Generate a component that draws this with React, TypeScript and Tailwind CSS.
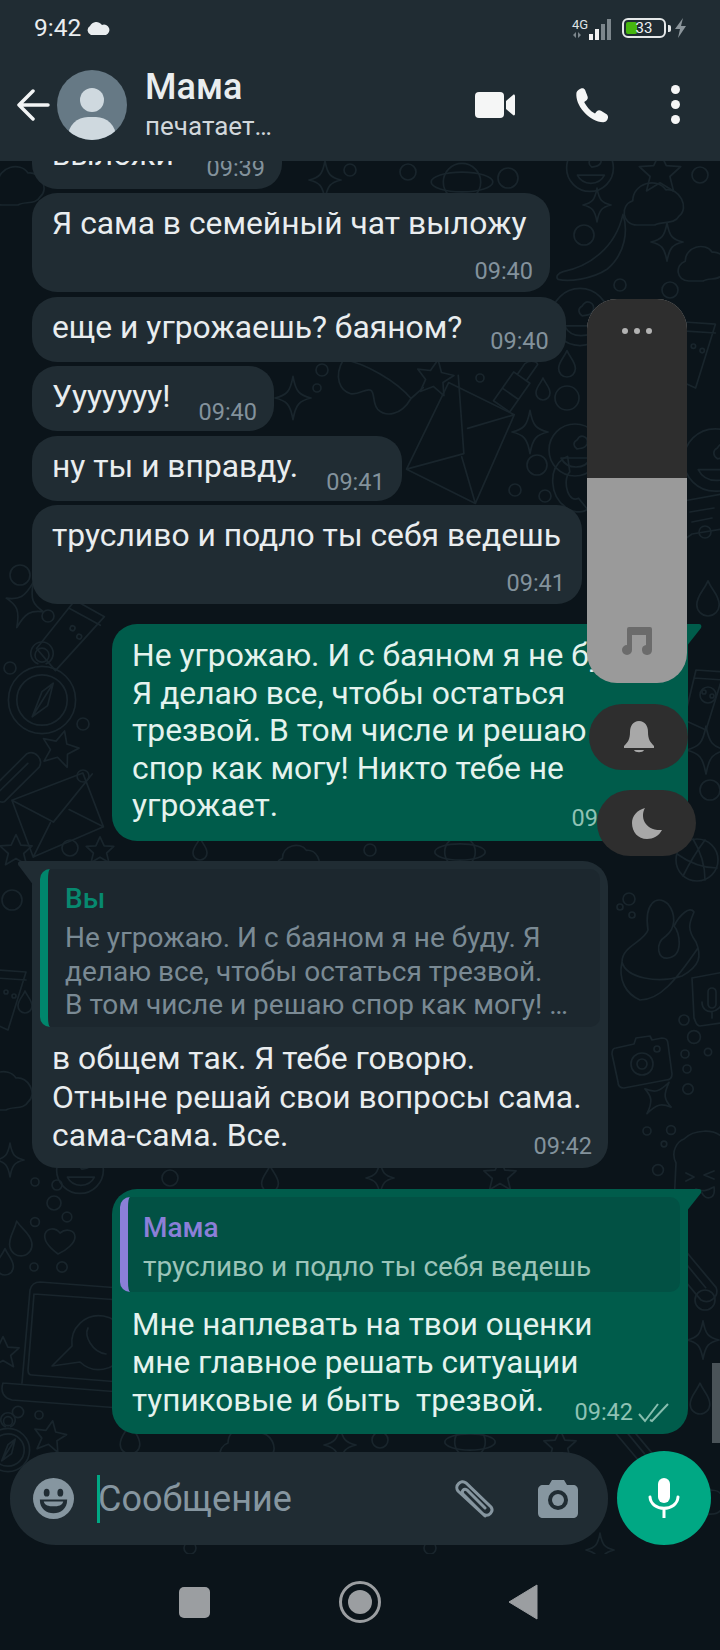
import React from 'react';

const font = { fontFamily: 'Roboto, "Noto Sans", sans-serif' };

type Doodle = [string, number, number, number?, number?];

// wallpaper doodles: [symbol, x, y, scale, rotation]
const doodles: Doodle[] = [
  ['cloud', 20, 185, 1], ['star4', 325, 180, 0.8], ['circle', 350, 170, 0.3], ['circle', 408, 172, 0.4], ['planet', 462, 182, 1.1], ['circle', 508, 178, 0.5],
  ['face', 590, 168, 0.9], ['star5', 660, 172, 0.9], ['cloud', 657, 203, 1.1], ['star4', 597, 205, 0.7], ['circle', 700, 175, 0.4],
  ['banana', 597, 243, 1.3], ['star4', 667, 242, 0.8], ['cloud', 705, 263, 0.9], ['circle', 584, 235, 0.5], ['circle', 620, 285, 0.3], ['circle', 670, 290, 0.4],
  ['face', 580, 317, 1.1], ['drop', 567, 365, 0.6], ['circle', 567, 398, 0.6], ['drop', 543, 390, 0.5],
  ['star4', 530, 432, 0.9], ['envelope', 462, 443, 1.9, -55], ['lipstick', 518, 383, 1.1, 35], ['face', 575, 450, 1],
  ['circle', 537, 465, 0.5], ['circle', 515, 490, 0.3], ['circle', 545, 496, 0.3], ['handset', 572, 485, 1.1],
  ['sunglasses', 372, 388, 1.3, 30], ['star5', 435, 377, 0.8, 10], ['star4', 293, 398, 0.9], ['circle', 322, 370, 0.3], ['circle', 317, 388, 0.2], ['circle', 480, 378, 0.2],
  ['glass', 700, 355, 1.1], ['face', 715, 460, 1.2], ['speech', 700, 520, 1], ['drop', 708, 600, 0.8], ['circle', 705, 532, 0.3],
  ['circle', 20, 575, 0.5], ['star4', 25, 605, 1, 20], ['circle', 48, 616, 0.3], ['glass', 75, 640, 1.2, 25],
  ['compass', 42, 700, 1.4], ['circle', 10, 668, 0.3], ['circle', 83, 724, 0.3], ['star5', 60, 748, 0.8, 15],
  ['clip', 12, 770, 1.2, -35], ['circle', 83, 776, 0.3], ['envelope', 58, 815, 1.5, -12], ['circle', 70, 848, 0.4],
  ['star5', 16, 850, 0.7], ['circle', 12, 900, 0.5], ['glass', 12, 1000, 1], ['drop', 25, 1003, 0.5], ['cloud', 8, 1090, 1],
  ['star4', 10, 1160, 0.7], ['circle', 35, 1182, 0.2], ['circle', 57, 1185, 0.25], ['circle', 54, 1203, 0.35], ['circle', 35, 1222, 0.22], ['circle', 67, 1217, 0.24],
  ['drop', 20, 1240, 0.8, -10], ['drop', 5, 1263, 0.6], ['heart', 60, 1240, 1], ['circle', 34, 1267, 0.2], ['circle', 62, 1267, 0.26],
  ['laptop', 60, 1340, 1], ['star5', 3, 1352, 0.7], ['circle', 18, 1412, 0.28], ['circle', 39, 1415, 0.2], ['star5', 50, 1436, 0.7, 10], ['compass', 8, 1450, 0.9],
  ['glass', 710, 700, 1], ['circle', 708, 695, 0.4], ['star4', 706, 750, 1], ['circle', 710, 790, 0.5],
  ['globe', 697, 860, 1], ['squiggle', 660, 950, 1], ['micbox', 710, 1000, 1], ['circle', 629, 899, 0.3], ['circle', 620, 907, 0.15], ['circle', 632, 915, 0.15],
  ['camera', 642, 1062, 1], ['star4', 658, 1098, 0.8, 35], ['circle', 684, 1020, 0.25], ['circle', 694, 1037, 0.32], ['circle', 685, 1054, 0.2], ['circle', 687, 1069, 0.2], ['circle', 688, 1089, 0.26], ['circle', 708, 1052, 0.18],
  ['circle', 647, 1131, 0.2], ['circle', 671, 1130, 0.22], ['circle', 664, 1144, 0.14], ['cookie', 700, 1165, 1], ['circle', 658, 1170, 0.27],
  ['clip', 700, 1270, 1.3, 60], ['star5', 500, 1175, 0.7], ['drop', 270, 1180, 0.6], ['circle', 170, 1178, 0.4], ['star4', 380, 1178, 0.7], ['face', 80, 1170, 0.9],
  ['cloud', 300, 860, 0.8], ['star5', 100, 850, 0.6], ['planet', 460, 852, 0.9], ['circle', 370, 850, 0.3], ['drop', 200, 850, 0.5],
  ['star4', 340, 1445, 0.8], ['cloud', 250, 1445, 1], ['circle', 380, 1440, 0.4], ['planet', 470, 1442, 0.9], ['clip', 640, 1440, 1, 60],
  ['drop', 130, 1440, 0.7], ['star5', 560, 1445, 0.7], ['circle', 430, 1548, 0.3], ['circle', 190, 1548, 0.3], ['star4', 600, 1550, 0.7],
  ['circle', 705, 1300, 0.5], ['star4', 703, 1340, 0.8], ['drop', 700, 1400, 0.7], ['cloud', 705, 1500, 0.8],
];

const Wallpaper = () => (
  <svg className="absolute left-0 top-0 w-[720px] h-[1393px]" viewBox="0 161 720 1393" fill="none" stroke="#19252c" strokeLinecap="round" strokeLinejoin="round">
    <defs>
      <symbol id="circle" overflow="visible"><circle r="20" /></symbol>
      <symbol id="star4" overflow="visible"><path d="M0-24C3-7 7-3 20 0 7 3 3 7 0 24-3 7-7 3-20 0-7-3-3-7 0-24Z" /></symbol>
      <symbol id="star5" overflow="visible"><path d="M0-22 7-7 23-6 11 5 15 21 0 12-15 21-11 5-23-6-7-7Z" /></symbol>
      <symbol id="drop" overflow="visible"><path d="M0-24C5-12 14-6 14 6A14 14 0 0 1-14 6C-14-6-5-12 0-24Z" /></symbol>
      <symbol id="cloud" overflow="visible"><path d="M-18 20C-32 20-34 2-22 -2-22-18 0-24 8-12 20-14 30 4 20 12 16 20 4 16-2 20Z" /></symbol>
      <symbol id="face" overflow="visible"><circle r="26" /><path d="M-14 8C-8 20 10 20 16 8ZM2-10C6-17 14-13 12-6 10-1 6-2 2-1-2-4-2-8 2-10Z" /></symbol>
      <symbol id="planet" overflow="visible"><circle r="17" /><ellipse rx="28" ry="9" /></symbol>
      <symbol id="compass" overflow="visible"><circle r="24" /><circle r="18" /><circle cy="-32" r="5" /><path d="M-3-26A8 8 0 1 1 3-26M8-12-7 12 0-6ZM8-12-7 12 4 4Z" /></symbol>
      <symbol id="envelope" overflow="visible"><path d="M-28-16 22-24 28 14-22 24ZM-28-16-4 4 28-22M-22 24-6 4M28 14 8-2" /></symbol>
      <symbol id="clip" overflow="visible"><path d="M-28 4 18-4A8 8 0 0 1 20 11L-20 18A5 5 0 0 1-22 9L14 3" /></symbol>
      <symbol id="handset" overflow="visible"><path d="M-8-24C-22-14-20 10-6 20-1 25 10 26 14 22L6 12C2 14-2 12-4 6-6 0-6-8-2-12L-4-26Z" /></symbol>
      <symbol id="glass" overflow="visible"><path d="M-14-30-26 20-4 30 14-28ZM-16-22 14-20" /><circle cx="-6" cy="-8" r="2" /><circle cx="2" cy="-4" r="2" /></symbol>
      <symbol id="speech" overflow="visible"><path d="M-22-18 22-26 28 8-8 14-22 24-18 10ZM-10-8 14-12M-8 2 12-2" /></symbol>
      <symbol id="banana" overflow="visible"><path d="M-26 22C-6 18 14 4 20-22 24-10 22 8 8 20-4 28-22 30-30 28-32 26-30 23-26 22Z" /></symbol>
      <symbol id="lipstick" overflow="visible"><path d="M-9-6H9V26H-9ZM-5-6V-18C-3-24 3-26 5-24V-6M-9 12H9" /></symbol>
      <symbol id="sunglasses" overflow="visible"><path d="M-30-8C-14-14 14-14 30-8 30 8 20 14 12 12 6 10 4 2 0 2-4 2-6 10-12 12-20 14-30 8-30-8ZM-30-8-34-20M30-8 34-20" /></symbol>
      <symbol id="heart" overflow="visible"><path d="M-2 14C-10 8-17 1-15-6-13-12-5-13 0-7 6-12 15-10 15-3 15 3 7 10-2 14Z" /></symbol>
      <symbol id="laptop" overflow="visible"><path d="M-38 43-30-50Q-28-58-20-58L60-52M-26-46-32 30Q-32 35-28 35L60 42M-26-46 60-40M-57 43 60 52M-57 43C-60 52-56 58-48 60L60 68" /><path d="M12 6A27 27 0 1 1 20 22L-8 26Z" /><path d="M28-12C24-4 32 12 46 14" /></symbol>
      <symbol id="globe" overflow="visible"><circle r="21" /><path d="M-20-6C-6 4 6 8 20 8M-14 16C-6 0 2-12 8-20M-4-21C4-8 8 6 8 20" /></symbol>
      <symbol id="squiggle" overflow="visible"><path d="M-38 12C-38-4-16-8-12-20-16-46-4-56 8-46 16-36 16-22 6-14-6-6-2 10 8 8 24 6 20-18 14-24 20-36 30-44 34-38 30-28 26-22 36-8 42 6 40 16 22 26-2 34-34 28-38 12ZM-38 12C-42 30-34 44-20 50 0 50 16 30 38-2" /></symbol>
      <symbol id="micbox" overflow="visible"><path d="M-18-22 14-28C18-28 20-26 20-22L24 16C24 20 22 22 18 22L-10 26C-14 26-14 22-16 18ZM-2-8A4 4 0 0 1 6-8V4A4 4 0 0 1-2 4ZM-8 2C-8 16 12 14 12 0M2 12V18" /></symbol>
      <symbol id="camera" overflow="visible"><path d="M-26-14-8-18-6-24 8-26 10-22 20-24C24-24 26-22 26-18L30 12C30 16 28 18 24 18L-18 26C-22 26-24 24-24 20L-30-8C-30-12-28-14-26-14Z" /><circle cy="2" r="11" /><circle cy="2" r="5" /><circle cx="15" cy="-13" r="3" /></symbol>
      <symbol id="cookie" overflow="visible"><path d="M-26 40-24-2C-30-14-22-24-16-26-6-36 14-36 22-28M-14 8-6 12-14 16M14 6 4 10 14 14M-4 24C4 28 10 24 14 22 16 34 6 36 2 28" /></symbol>
    </defs>
    {doodles.map(([name, x, y, s = 1, r = 0], i) => (
      <use key={i} href={`#${name}`} transform={`translate(${x} ${y}) rotate(${r}) scale(${s})`} strokeWidth={1.7 / s} />
    ))}
  </svg>
);

const InTail = () => (
  <svg className="absolute left-[-14px] top-0" width="16" height="26" viewBox="0 0 16 26">
    <path d="M16 0H3C0 0-1 3 1 5L16 25Z" fill="#202c33" />
  </svg>
);

const OutTail = () => (
  <svg className="absolute right-[-14px] top-0" width="16" height="24" viewBox="0 0 16 24">
    <path d="M0 0H13C15 0 16 2 15 4L0 23Z" fill="#005c4b" />
  </svg>
);

const Ticks = () => (
  <svg width="34" height="22" viewBox="0 0 34 22" fill="none" stroke="#86bdae" strokeWidth="2">
    <path d="M2 13 8 20 21 3" />
    <path d="M13 19 15 20 31 3" />
  </svg>
);

const Time = ({ children, out }: { children: React.ReactNode; out?: boolean }) => (
  <span className={`text-[23.5px] leading-[28px] whitespace-nowrap ${out ? 'text-[#8fc2b4]' : 'text-[#83929c]'}`}>{children}</span>
);

// one line bubble with the time to the right of the text
const InlineBubble = ({ text, time, offset }: { text: string; time: string; offset: string }) => (
  <div className="w-fit h-[65px] flex items-start gap-[28px] rounded-[25px] bg-[#202c33] pl-[20px] pr-[17px] pt-[12px] text-[31.8px] leading-[37px] text-[#e9edef]">
    <span className="whitespace-nowrap">{text}</span>
    <span className={`leading-none ${offset}`}><Time>{time}</Time></span>
  </div>
);

const StackBubble = ({ text, time, width }: { text: string; time: string; width: string }) => (
  <div className={`${width} h-[99px] flex flex-col rounded-[25px] bg-[#202c33] pl-[20px] pr-[17px] pt-[12px] text-[31.8px] leading-[37px] text-[#e9edef]`}>
    <span className="whitespace-nowrap">{text}</span>
    <span className="self-end mt-[8px]"><Time>{time}</Time></span>
  </div>
);

const VolumePanel = () => (
  <>
    <div className="absolute left-[587px] top-[299px] w-[100px] h-[384px] rounded-[30px] overflow-hidden flex flex-col bg-[#9a9a9a]">
      <div className="h-[179px] bg-[#2e2e2e] flex justify-center gap-[6px] pt-[29px]">
        <span className="w-[6px] h-[6px] rounded-full bg-[#b3b3b3]" />
        <span className="w-[6px] h-[6px] rounded-full bg-[#b3b3b3]" />
        <span className="w-[6px] h-[6px] rounded-full bg-[#b3b3b3]" />
      </div>
      <div className="flex-1 flex items-end justify-center pb-[27px]">
        <svg width="30" height="30" viewBox="0 0 30 30" fill="#6b6b6b">
          <path d="M7 1H28A2 2 0 0 1 30 3V24A5 5 0 1 1 24 19V9H10V24A5 5 0 1 1 5 19V3A2 2 0 0 1 7 1Z" />
        </svg>
      </div>
    </div>
    <div className="absolute left-[589px] top-[704px] w-[99px] h-[66px] rounded-[33px] bg-[#2e2e2e] flex items-center justify-center">
      <svg width="32" height="34" viewBox="0 0 32 34" fill="#a8a8a8">
        <path d="M16 1C22 1 25 6 25 12C25 19 27 22 31 26V28H1V26C5 22 7 19 7 12C7 6 10 1 16 1ZM11 30H21C20 33 12 33 11 30Z" />
      </svg>
    </div>
    <div className="absolute left-[597px] top-[790px] w-[99px] h-[66px] rounded-[33px] bg-[#2e2e2e] flex items-center justify-center">
      <svg width="32" height="32" viewBox="0 0 32 32" fill="#a8a8a8">
        <path d="M14 1C9 9 13 24 31 23C28 29 22 32 16 32C7 32 1 25 1 16C1 9 6 3 14 1Z" />
      </svg>
    </div>
  </>
);

export default function App() {
  return (
    <div style={font} className="relative w-[720px] h-[1650px] overflow-hidden flex flex-col bg-[#0b141a]">
      <header className="z-10 h-[161px] shrink-0 bg-[#202c33] flex flex-col">
        <div className="h-[56px] flex items-center justify-between pl-[34px] pr-[33px]">
          <div className="flex items-center gap-[5px]">
            <span className="text-[24.5px] leading-none text-[#e9edef]">9:42</span>
            <svg width="24" height="14" viewBox="0 0 24 14" fill="#e9edef">
              <path d="M5 14A5 5 0 0 1 4 5 7 7 0 0 1 16 4 5 5 0 0 1 20 14Z" />
            </svg>
          </div>
          <div className="flex items-center">
            <div className="flex flex-col w-[20px]">
              <span className="text-[13px] leading-[13px] text-[#dfe3e5]">4G</span>
              <svg width="18" height="8" viewBox="0 0 18 8" fill="#7c868c"><path d="M4 1V7L1 4ZM6 1V7L9 4Z" /></svg>
            </div>
            <svg width="24" height="22" viewBox="0 0 24 22" className="ml-[-3px] mt-[2px]">
              <rect x="0" y="16" width="4" height="6" fill="#f2f2f2" />
              <rect x="6" y="11" width="4" height="11" fill="#f2f2f2" />
              <rect x="12" y="6" width="4" height="16" fill="#7c868c" />
              <rect x="18" y="1" width="4" height="21" fill="#7c868c" />
            </svg>
            <div className="relative ml-[9px] w-[44px] h-[20px] rounded-[6px] border-2 border-[#e5e8e9] p-[2px]">
              <div className="w-[11px] h-full rounded-[2px] bg-[#46b60f]" />
              <span className="absolute inset-0 flex items-center justify-center text-[15px] leading-none text-[#eef1f2]">33</span>
            </div>
            <span className="ml-[2px] w-[3px] h-[7px] rounded-r-[2px] bg-[#e5e8e9]" />
            <svg width="13" height="20" viewBox="0 0 13 20" fill="#8b959b" className="ml-[3px]">
              <path d="M9 0 1 11H6L4 20 12 8H7Z" />
            </svg>
          </div>
        </div>
        <div className="flex-1 flex items-start pl-[17px] pr-[40px] pt-[14px]">
          <svg width="33" height="32" viewBox="0 0 33 32" fill="none" stroke="#f2f4f5" strokeWidth="3.5" strokeLinecap="round" strokeLinejoin="round" className="mt-[19px] shrink-0">
            <path d="M31 16H2M16 2 2 16 16 30" />
          </svg>
          <div className="relative ml-[7px] w-[70px] h-[70px] rounded-full overflow-hidden bg-[#667985] shrink-0">
            <div className="absolute left-[23px] top-[18px] w-[24px] h-[24px] rounded-full bg-[#cfd9df]" />
            <div className="absolute left-[11px] top-[47px] w-[48px] h-[40px] rounded-full bg-[#cfd9df]" />
          </div>
          <div className="ml-[18px] flex flex-col">
            <span className="text-[36px] font-medium leading-[38px] mt-[-2px] text-[#e9edef]">Мама</span>
            <span className="text-[26px] leading-[30px] mt-[5px] text-[#d1d7db]">печатает…</span>
          </div>
          <div className="ml-auto flex items-center mt-[15px]">
            <svg width="40" height="26" viewBox="0 0 40 26" fill="#f5f6f6">
              <rect x="0" y="0" width="29" height="26" rx="4" />
              <path d="M31 9 38 3C39 2 40 3 40 4V22C40 23 39 24 38 23L31 17Z" />
            </svg>
            <svg width="37" height="36" viewBox="0 0 24 24" fill="#f5f6f6" className="ml-[57px]">
              <path d="M6.6 0.8C5.6 0.8 3 2 2.6 4C2.2 8 4 12.5 7.5 16.5 11 20.5 16 23.5 20.5 23.5 22.5 23.5 23.7 21.5 23.7 20 23.7 19 23 18.3 22.2 17.8L19 15.8C18 15.2 17 15.4 16.2 16.2L15 17.6C12 16.4 9 12.5 7.8 10L9.4 8.8C10.2 8.2 10.4 7.2 10 6.2L8.4 2C8 1.2 7.4 0.8 6.6 0.8Z" />
            </svg>
            <div className="ml-[62px] flex flex-col gap-[6px]">
              <span className="w-[9px] h-[9px] rounded-full bg-[#f5f6f6]" />
              <span className="w-[9px] h-[9px] rounded-full bg-[#f5f6f6]" />
              <span className="w-[9px] h-[9px] rounded-full bg-[#f5f6f6]" />
            </div>
          </div>
        </div>
      </header>

      <main className="relative flex-1 flex flex-col overflow-hidden">
        <Wallpaper />
        <div className="relative flex-1 flex flex-col overflow-hidden pl-[32px]">
          <div className="flex flex-col mt-[-37px]">
            <div className="w-[250px] h-[65px] flex items-start justify-between rounded-[25px] bg-[#202c33] pl-[20px] pr-[17px] pt-[12px] text-[31.8px] leading-[37px] text-[#e9edef]">
              <span>выложи</span>
              <span className="leading-none pt-[14px]"><Time>09:39</Time></span>
            </div>
            <div className="mt-[4px]"><StackBubble width="w-[518px]" text="Я сама в семейный чат выложу" time="09:40" /></div>
            <div className="mt-[5px]"><InlineBubble text="еще и угрожаешь? баяном?" time="09:40" offset="pt-[14px]" /></div>
            <div className="mt-[4px]"><InlineBubble text="Ууууууу!" time="09:40" offset="pt-[16px]" /></div>
            <div className="mt-[5px]"><InlineBubble text="ну ты и вправду." time="09:41" offset="pt-[16px]" /></div>
            <div className="mt-[4px]"><StackBubble width="w-[550px]" text="трусливо и подло ты себя ведешь" time="09:41" /></div>

            <div className="relative ml-[80px] mt-[20px] w-[576px] h-[217px] rounded-[25px] rounded-tr-none bg-[#005c4b] pl-[20px] pt-[13px] text-[31.8px] leading-[37.5px] text-[#e4f3ee]">
              <OutTail />
              <div className="whitespace-nowrap">
                Не угрожаю. И с баяном я не буду.<br />
                Я делаю все, чтобы остаться<br />
                трезвой. В том числе и решаю<br />
                спор как могу! Никто тебе не<br />
                угрожает.
              </div>
              <div className="absolute right-[58px] bottom-[7px]"><Time out>09:42</Time></div>
            </div>

            <div className="relative mt-[20px] w-[576px] h-[307px] rounded-[25px] rounded-tl-none bg-[#202c33] pl-[8px] pr-[8px] pt-[8px]">
              <InTail />
              <div className="h-[158px] rounded-[10px] bg-[#1c272e] border-l-[8px] border-[#00866c] pl-[17px] pt-[14px]">
                <div className="text-[28px] font-medium leading-[32px] text-[#07896f]">Вы</div>
                <div className="mt-[6px] text-[28px] leading-[33.5px] text-[#7a8a94] whitespace-nowrap">
                  Не угрожаю. И с баяном я не буду. Я<br />
                  делаю все, чтобы остаться трезвой.<br />
                  В том числе и решаю спор как могу! …
                </div>
              </div>
              <div className="pl-[12px] pt-[12px] text-[31.8px] leading-[38.5px] text-[#e9edef] whitespace-nowrap">
                в общем так. Я тебе говорю.<br />
                Отныне решай свои вопросы сама.<br />
                сама-сама. Все.
              </div>
              <div className="absolute right-[16px] bottom-[7px]"><Time>09:42</Time></div>
            </div>

            <div className="relative ml-[80px] mt-[21px] w-[576px] h-[245px] rounded-[25px] rounded-tr-none bg-[#005c4b] px-[8px] pt-[8px]">
              <OutTail />
              <div className="h-[95px] rounded-[10px] bg-[#025144] border-l-[8px] border-[#8b7fd8] pl-[15px] pt-[15px]">
                <div className="text-[28px] font-medium leading-[32px] text-[#8b7fd8]">Мама</div>
                <div className="mt-[6px] text-[28px] leading-[33px] text-[#9cc4b9]">трусливо и подло ты себя ведешь</div>
              </div>
              <div className="pl-[12px] pt-[14px] text-[31.5px] leading-[38px] text-[#e4f3ee]">
                Мне наплевать на твои оценки<br />
                мне главное решать ситуации<br />
                <span className="whitespace-pre">тупиковые и быть  трезвой.</span>
              </div>
              <div className="absolute right-[17px] bottom-[8px] flex items-center gap-[4px]">
                <Time out>09:42</Time>
                <Ticks />
              </div>
            </div>
          </div>
        </div>

        <div className="relative h-[102px] shrink-0 flex items-start pl-[10px] gap-[9px]">
          <div className="w-[598px] h-[93px] rounded-[46px] bg-[#202c33] flex items-center pl-[23px] pr-[30px]">
            <svg width="41" height="41" viewBox="0 0 42 42" className="shrink-0">
              <circle cx="21" cy="21" r="21" fill="#8696a0" />
              <ellipse cx="14" cy="15" rx="3" ry="4" fill="#202c33" />
              <ellipse cx="28" cy="15" rx="3" ry="4" fill="#202c33" />
              <path d="M7 22H35C35 32 28 36 21 36 14 36 7 32 7 22Z" fill="#202c33" />
              <path d="M11 24H31C30 28 26 29 21 29 16 29 12 28 11 24Z" fill="#8696a0" />
            </svg>
            <span className="ml-[23px] w-[3px] h-[48px] bg-[#00a884] shrink-0" />
            <span className="ml-[-2px] text-[36px] leading-none text-[#8696a0]">Сообщение</span>
            <svg width="44" height="42" viewBox="0 0 42 42" fill="none" stroke="#8696a0" strokeWidth="3" strokeLinecap="round" className="ml-auto">
              <path d="M33 38 6 13C2 8 9 1 14 5L39 29C42 33 37 40 31 36L11 16C9 13 12 10 15 12L33 30" />
            </svg>
            <svg width="40" height="38" viewBox="0 0 40 38" className="ml-[43px]">
              <path d="M5 5H11L14 0H26L29 5H35C38 5 40 7 40 10V33C40 36 38 38 35 38H5C2 38 0 36 0 33V10C0 7 2 5 5 5Z" fill="#8696a0" />
              <circle cx="20" cy="20" r="10" fill="#202c33" />
              <circle cx="20" cy="20" r="6" fill="#8696a0" />
            </svg>
          </div>
          <div className="w-[94px] h-[94px] mt-[-1px] rounded-full bg-[#00a884] flex items-center justify-center">
            <svg width="32" height="40" viewBox="0 0 32 40" fill="none">
              <rect x="10" y="0" width="12" height="25" rx="6" fill="#fff" />
              <path d="M2 19C3 34 29 34 30 19" stroke="#fff" strokeWidth="3" strokeLinecap="round" />
              <path d="M16 30V40" stroke="#fff" strokeWidth="3" />
            </svg>
          </div>
        </div>
      </main>

      <nav className="h-[96px] shrink-0 bg-[#0b141a] flex items-start justify-center pr-[3px]">
        <span className="mt-[33px] w-[31px] h-[31px] rounded-[5px] bg-[#9b9ea1]" />
        <span className="ml-[129px] mt-[27px] w-[42px] h-[42px] rounded-full border-[3px] border-[#9b9ea1] flex items-center justify-center">
          <span className="w-[24px] h-[24px] rounded-full bg-[#9b9ea1]" />
        </span>
        <svg width="30" height="36" viewBox="0 0 30 36" fill="#9b9ea1" className="ml-[127px] mt-[30px]">
          <path d="M29 1V35L1 18Z" stroke="#9b9ea1" strokeLinejoin="round" />
        </svg>
      </nav>

      <VolumePanel />
      <div className="absolute left-[712px] top-[1363px] w-[8px] h-[80px] bg-[#4a5358]" />
    </div>
  );
}
